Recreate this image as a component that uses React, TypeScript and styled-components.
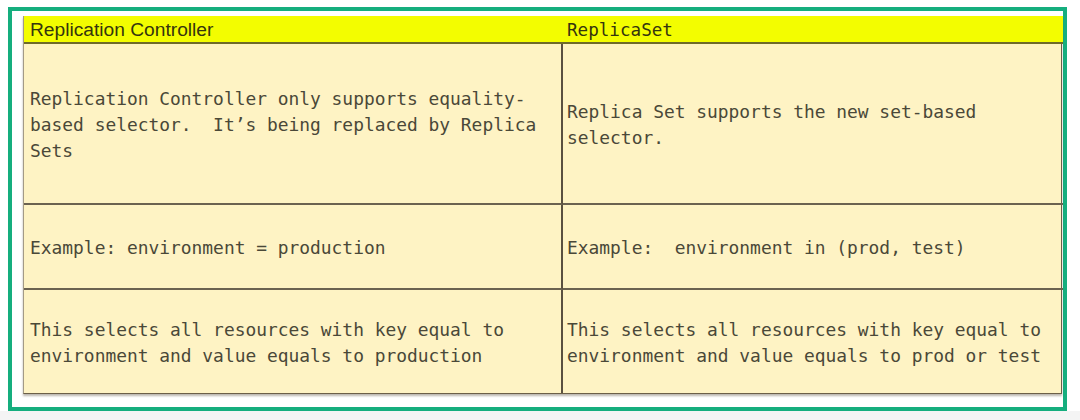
import React from "react";
import styled, { createGlobalStyle } from "styled-components";

const Global = createGlobalStyle`
  html, body { margin: 0; padding: 0; background: #f4f4f4; }
  #root { width: 1080px; }
`;

const Page = styled.div`
  width: 1080px;
  height: 411px;
  background: #ffffff;
  padding: 7px 0 0 8px;
  box-sizing: border-box;
`;

const Frame = styled.div`
  width: 1059px;
  height: 404px;
  box-sizing: border-box;
  border: 4px solid #15ae7e;
  padding: 5px 1px 0 11px;
`;

const Table = styled.div`
  display: grid;
  grid-template-columns: 539px 500px;
  grid-template-rows: 28px 161px 85px 103px;
  width: 1039px;
  box-sizing: border-box;
  border-left: 1px solid #a39a86;
  border-right: 1px solid #6b5f48;
  border-bottom: 1px solid #6b5f48;
  box-shadow: 0 2px 2px rgba(60, 50, 30, 0.35);
  background: #fef3c4;
`;

const HeadCell = styled.div<{ $mono?: boolean; $last?: boolean }>`
  background: #f3fd00;
  border-bottom: 2px solid #6e6a2a;
  display: flex;
  align-items: center;
  padding-left: ${(p) => (p.$last ? "4px" : "6px")};
  padding-top: 2px;
  font-family: ${(p) =>
    p.$mono ? '"DejaVu Sans Mono", monospace' : '"Liberation Sans", Arial, sans-serif'};
  font-size: ${(p) => (p.$mono ? "17.6px" : "19.2px")};
  color: #35350e;
  white-space: pre;
`;

const Cell = styled.div<{ $last?: boolean; $bottom?: boolean }>`
  display: flex;
  align-items: center;
  box-sizing: border-box;
  padding-left: ${(p) => (p.$last ? "4px" : "6px")};
  padding-top: 2px;
  border-right: ${(p) => (p.$last ? "none" : "2px solid #5a5040")};
  border-bottom: ${(p) => (p.$bottom ? "none" : "2px solid #6b6250")};
  font-family: "DejaVu Sans Mono", monospace;
  font-size: 17.9px;
  line-height: 26px;
  color: #4a4838;
  white-space: pre;
`;

const rows: [string, string][] = [
  [
    "Replication Controller only supports equality-\nbased selector.  It\u2019s being replaced by Replica\nSets",
    "Replica Set supports the new set-based\nselector.",
  ],
  ["Example: environment = production", "Example:  environment in (prod, test)"],
  [
    "This selects all resources with key equal to\nenvironment and value equals to production",
    "This selects all resources with key equal to\nenvironment and value equals to prod or test",
  ],
];

export default function App() {
  return (
    <>
      <Global />
      <Page>
        <Frame>
          <Table>
            <HeadCell>Replication Controller</HeadCell>
            <HeadCell $mono $last>
              ReplicaSet
            </HeadCell>
            {rows.map(([a, b], i) => (
              <React.Fragment key={i}>
                <Cell $bottom={i === rows.length - 1}>{a}</Cell>
                <Cell $last $bottom={i === rows.length - 1}>
                  {b}
                </Cell>
              </React.Fragment>
            ))}
          </Table>
        </Frame>
      </Page>
    </>
  );
}
